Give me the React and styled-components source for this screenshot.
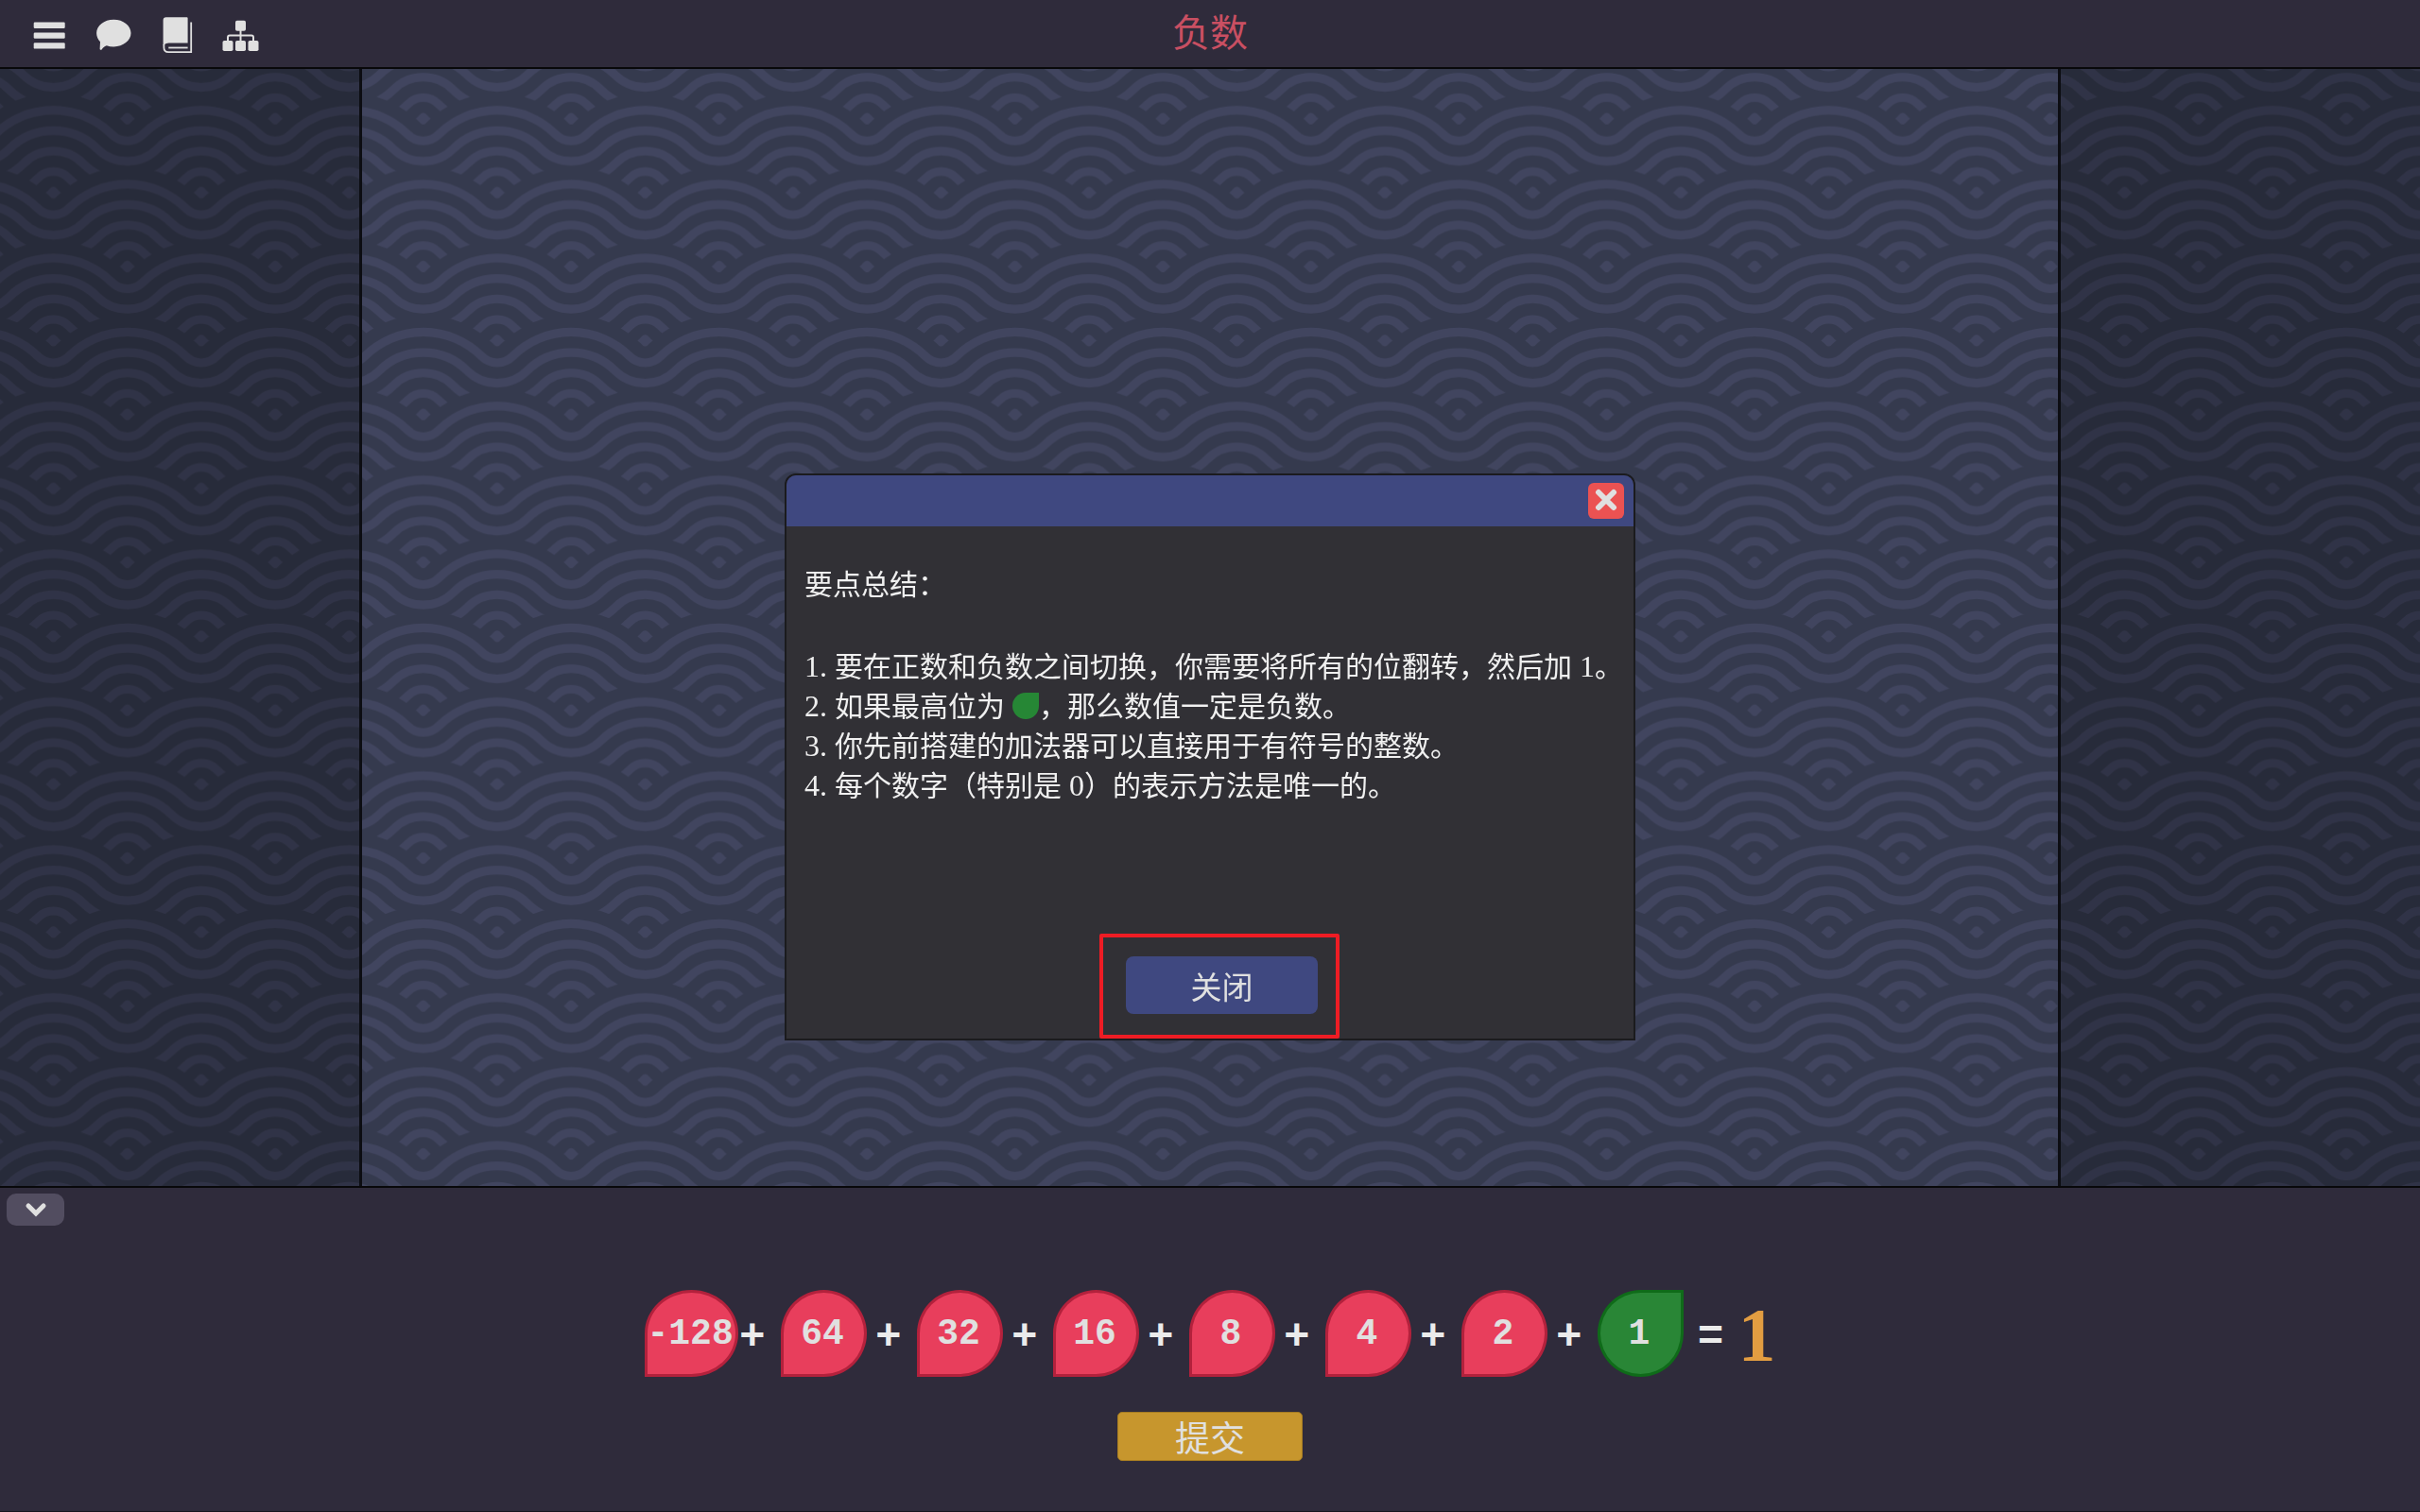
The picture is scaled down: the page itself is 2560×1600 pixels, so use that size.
import React from "react";
import styled, { createGlobalStyle } from "styled-components";

const CJK = `"Noto Sans CJK SC", sans-serif`;
const SERIF_DIGITS = `"Liberation Serif", "Noto Sans CJK SC", serif`;
const MONO = `"Liberation Mono", monospace`;

const Global = createGlobalStyle`
  *, *::before, *::after { box-sizing: border-box; }
  body { margin: 0; background: #2f2b3b; font-family: ${CJK}; }
  button { border: 0; padding: 0; margin: 0; font: inherit; color: inherit; background: none; cursor: pointer; }
`;

const Page = styled.div`
  min-height: 100vh;
  display: flex;
  flex-direction: column;
  background: #2f2b3b;
`;

/* ---------- top bar ---------- */

const TopBar = styled.header`
  display: grid;
  grid-template-columns: 1fr auto 1fr;
  align-items: center;
  height: 73px;
  padding: 0 30px;
  border-bottom: 2px solid #08080a;
`;

const Toolbar = styled.nav`
  display: flex;
  gap: 24px;
`;

const IconButton = styled.button`
  display: block;
  width: 44px;
  height: 45px;
  color: #e0e0e0;

  svg { display: block; width: 100%; height: 100%; }
`;

const Title = styled.h1`
  margin: 0;
  padding-bottom: 8px;
  font-size: 40px;
  line-height: 48px;
  font-weight: 400;
  color: #c94f62;
`;

const MenuIcon = () => (
  <svg viewBox="30 13 44 45" fill="currentColor" aria-hidden="true">
    <rect x="35.7" y="23.6" width="33" height="6.3" rx="1.2" />
    <rect x="35.7" y="34.5" width="33" height="6.3" rx="1.2" />
    <rect x="35.7" y="45.3" width="33" height="6.3" rx="1.2" />
  </svg>
);

const ChatIcon = () => (
  <svg viewBox="98 13 44 45" fill="currentColor" aria-hidden="true">
    <path d="M120.3 20.8c10.1 0 18.2 6.400 18.2 14.300s-8.100 14.300-18.200 14.300c-2.700 0-5.200-.4-7.500-1.200-2.500 1-4 2.400-5 4-.8 1-2.300.6-2.200-.7l.4-7.200c-2.400-2.500-3.900-5.700-3.900-9.200 0-7.900 8.100-14.300 18.200-14.300z" />
  </svg>
);

const BookIcon = () => (
  <svg viewBox="166 13 44 45" aria-hidden="true">
    <path fill="currentColor" d="M175.8 18.2H197.6q1 0 1 1V45.6H178.5q-3 0-5 2-.9.8-.9-.3V21.4q0-3.200 3.200-3.200z" />
    <path fill="none" stroke="currentColor" strokeWidth="1.800" d="M173.400 47v3.200q0 4.900 4.800 4.900H202.200V23.600" />
    <path fill="none" stroke="currentColor" strokeWidth="1.800" d="M178.300 50.500H198.600" />
  </svg>
);

const TreeIcon = () => (
  <svg viewBox="234 13 44 45" fill="currentColor" aria-hidden="true">
    <rect x="249" y="21.800" width="11" height="11" rx="1.800" />
    <rect x="235.500" y="43" width="11" height="11" rx="1.800" />
    <rect x="249" y="43" width="11" height="11" rx="1.800" />
    <rect x="262.500" y="43" width="11" height="11" rx="1.800" />
    <path fill="none" stroke="currentColor" strokeWidth="2" d="M254.500 32V44M241 44V39.500q0-2 2-2H266q2 0 2 2V44" />
  </svg>
);

/* ---------- wave backdrop ---------- */

const Stage = styled.main`
  position: relative;
  isolation: isolate;
  flex: 1;
  min-height: 640px;
  display: grid;
  grid-template-columns: 383fr 1794fr 383fr;
`;

const Backdrop = styled.svg`
  position: absolute;
  inset: 0;
  z-index: -1;
  width: 100%;
  height: 100%;
`;

const Gutter = styled.div`
  grid-column: ${(p) => (p.$side === "left" ? 1 : 3)};
  background: rgba(0, 0, 0, 0.25);
  border-${(p) => (p.$side === "left" ? "right" : "left")}: 3px solid #0c0d12;
`;

// Every wave alternates between a crest around one dot and a trough around
// the dots of the row above; both arcs meet at 45 degrees.
const PERIOD = 469.5;
const REACH = PERIOD * Math.SQRT1_2;

const wave = (x0, y, crest) => {
  const trough = REACH - crest;
  const d = crest * Math.SQRT1_2;
  let path = `M${x0 - d} ${y - d}`;
  for (let k = 0; k < 4; k++) {
    const x = x0 + k * PERIOD;
    path += `A${crest} ${crest} 0 0 1 ${x + d} ${y - d}`;
    path += `A${trough} ${trough} 0 0 0 ${x + PERIOD - d} ${y - d}`;
  }
  return path;
};

const WaveRow = ({ index }) => {
  const y = (index * PERIOD) / 2;
  const x0 = (index % 2 ? PERIOD / 2 : 0) - 2 * PERIOD;
  const centres = [0, 1, 2, 3, 4].map((k) => x0 + k * PERIOD);
  return (
    <g>
      {centres.map((x) => <circle key={x} cx={x} cy={y} r="316" fill="#353a4e" />)}
      {[262, 197, 132, 67].map((r) => (
        <path key={r} d={wave(x0, y, r)} fill="none" stroke="#41455f" strokeWidth="27" />
      ))}
      {centres.map((x) => (
        <path
          key={x}
          transform={`translate(${x} ${y})`}
          fill="#41455f"
          d="M-25 1Q-18-5-12-12Q0-26 12-12Q18-5 25 1Q18 6 10 14Q0 22-10 14Q-18 6-25 1Z"
        />
      ))}
    </g>
  );
};

const Waves = () => (
  <Backdrop aria-hidden="true">
    <defs>
      <pattern
        id="waves"
        width={PERIOD}
        height={PERIOD}
        patternUnits="userSpaceOnUse"
        patternTransform="translate(134.700 52.700) scale(0.333333)"
      >
        <rect width={PERIOD} height={PERIOD} fill="#353a4e" />
        {[-2, -1, 0, 1, 2, 3, 4].map((i) => <WaveRow key={i} index={i} />)}
      </pattern>
    </defs>
    <rect width="100%" height="100%" fill="url(#waves)" />
  </Backdrop>
);

/* ---------- dialog ---------- */

const Overlay = styled.div`
  position: fixed;
  inset: 0;
  display: grid;
  place-items: center;
  padding-top: 2px;
  pointer-events: none;
`;

const Dialog = styled.section`
  display: flex;
  flex-direction: column;
  width: 900px;
  max-width: 100%;
  min-height: 600px;
  border: 2px solid #1b1b1e;
  border-radius: 12px 12px 0 0;
  background: #313035;
  overflow: hidden;
  pointer-events: auto;
`;

const DialogHeader = styled.div`
  display: flex;
  align-items: center;
  justify-content: flex-end;
  height: 54px;
  padding: 0 10px;
  background: #3f4880;
`;

const CrossButton = styled.button`
  display: grid;
  place-items: center;
  width: 38px;
  height: 38px;
  padding-bottom: 3px;
  border-radius: 6px;
  background: #eb5252;

  svg { display: block; width: 24px; height: 24px; }
`;

const DialogBody = styled.div`
  flex: 1;
  padding: 38px 0 0 19px;
  font-size: 30px;
  line-height: 42px;
  color: #f0f0f0;
`;

const Heading = styled.p`
  margin: 0 0 45px;
`;

const Points = styled.ol`
  margin: 0;
  padding: 0;
  list-style: none;
`;

const Point = styled.li`
  white-space: pre-wrap;
`;

const Digit = styled.span`
  font-family: ${SERIF_DIGITS};
  font-size: 32px;
  line-height: 32px;
`;

const Leaf = styled.span`
  display: inline-block;
  width: 28px;
  height: 28px;
  border-radius: 50% 0 50% 50%;
  background: #268735;
  vertical-align: -3px;
`;

const DialogActions = styled.div`
  display: flex;
  justify-content: center;
  padding-left: 20px;
`;

const Highlight = styled.div`
  padding: 20px 19px 22px 24px;
  border: 4px solid #ee1c24;
  border-radius: 2px;
`;

const CloseButton = styled.button`
  display: block;
  width: 203px;
  height: 61px;
  border-radius: 8px;
  background: #3f4880;
  font-size: 33px;
  line-height: 40px;
  color: #e0e0e0;
`;

/* ---------- answer panel ---------- */

const Panel = styled.footer`
  display: flex;
  flex-direction: column;
  align-items: center;
  padding: 6px 7px 53px;
  border-top: 2px solid #08080a;
  border-bottom: 1px solid #17151f;
`;

const CollapseButton = styled.button`
  display: grid;
  place-items: center;
  align-self: flex-start;
  width: 61px;
  height: 34px;
  border-radius: 10px;
  background: #524d60;

  svg { display: block; width: 24px; height: 18px; }
`;

const Equation = styled.div`
  display: flex;
  align-items: center;
  margin: 68px 0 37px;
  font-family: ${MONO};
  font-weight: 700;
  font-size: 38px;
  line-height: 44px;
  color: #ebebeb;
`;

const Term = styled.div`
  display: flex;
  align-items: center;
  justify-content: space-between;
  width: ${(p) => (p.$last ? "91px" : "144px")};
  padding-right: ${(p) => (p.$last ? "0" : "16px")};
`;

const Drop = styled.div`
  display: flex;
  align-items: center;
  justify-content: center;
  min-width: 91px;
  height: 92px;
  padding: 2px 2px 0 0;
  border: 3px solid ${(p) => (p.$on ? "#0f6b19" : "#b3213c")};
  border-radius: ${(p) => (p.$on ? "50% 0 50% 50%" : "50% 50% 50% 0")};
  background: ${(p) => (p.$on ? "#298636" : "#e83e5c")};
  color: #e0e0e0;
`;

const Operator = styled.span`
  padding-top: 10px;
  font-size: 46px;
`;

const Equals = styled(Operator)`
  width: 58px;
  text-align: center;
`;

const Result = styled.output`
  padding-top: 4px;
  font-family: "Liberation Serif", serif;
  font-size: 80px;
  line-height: 84px;
  color: #e29d41;
`;

const SubmitButton = styled.button`
  width: 196px;
  height: 52px;
  border: 1px solid #a67c22;
  border-radius: 5px;
  background: #c7962d;
  font-size: 37px;
  line-height: 48px;
  color: #e0e0e0;
`;

const TERMS = ["-128", "64", "32", "16", "8", "4", "2", "1"];

export default function App() {
  return (
    <Page>
      <Global />
      <TopBar>
        <Toolbar>
          <IconButton aria-label="菜单"><MenuIcon /></IconButton>
          <IconButton aria-label="对话"><ChatIcon /></IconButton>
          <IconButton aria-label="手册"><BookIcon /></IconButton>
          <IconButton aria-label="关卡"><TreeIcon /></IconButton>
        </Toolbar>
        <Title>负数</Title>
      </TopBar>

      <Stage>
        <Waves />
        <Gutter $side="left" />
        <Gutter $side="right" />
      </Stage>

      <Panel>
        <CollapseButton aria-label="收起">
          <svg viewBox="0 0 24 18" fill="none" stroke="#e0e0e0" strokeWidth="5" strokeLinecap="round" aria-hidden="true">
            <path d="M4 5l8 8 8-8" />
          </svg>
        </CollapseButton>
        <Equation>
          {TERMS.map((value, i) => {
            const last = i === TERMS.length - 1;
            return (
              <Term key={value} $last={last}>
                <Drop $on={last}>{value}</Drop>
                {!last && <Operator>+</Operator>}
              </Term>
            );
          })}
          <Equals>=</Equals>
          <Result>1</Result>
        </Equation>
        <SubmitButton>提交</SubmitButton>
      </Panel>

      <Overlay>
        <Dialog role="dialog" aria-label="要点总结">
          <DialogHeader>
            <CrossButton aria-label="关闭窗口">
              <svg viewBox="0 0 24 24" fill="none" stroke="#e0e0e0" strokeWidth="6" strokeLinecap="round" aria-hidden="true">
                <path d="M4 4l16 16M20 4L4 20" />
              </svg>
            </CrossButton>
          </DialogHeader>
          <DialogBody>
            <Heading>要点总结：</Heading>
            <Points>
              <Point><Digit>1. </Digit>要在正数和负数之间切换，你需要将所有的位翻转，然后加<Digit> 1</Digit>。</Point>
              <Point><Digit>2. </Digit>如果最高位为<Digit> </Digit><Leaf />，那么数值一定是负数。</Point>
              <Point><Digit>3. </Digit>你先前搭建的加法器可以直接用于有符号的整数。</Point>
              <Point><Digit>4. </Digit>每个数字（特别是<Digit> 0</Digit>）的表示方法是唯一的。</Point>
            </Points>
          </DialogBody>
          <DialogActions>
            <Highlight>
              <CloseButton>关闭</CloseButton>
            </Highlight>
          </DialogActions>
        </Dialog>
      </Overlay>
    </Page>
  );
}
